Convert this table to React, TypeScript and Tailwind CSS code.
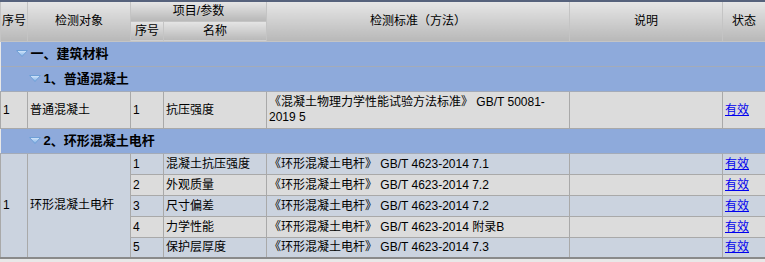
const font = { fontFamily: '"Liberation Sans", "Noto Sans CJK SC", sans-serif' };

type Item = { no: number; name: string; std: string };

const poleItems: Item[] = [
  { no: 1, name: "混凝土抗压强度", std: "《环形混凝土电杆》 GB/T 4623-2014 7.1" },
  { no: 2, name: "外观质量", std: "《环形混凝土电杆》 GB/T 4623-2014 7.2" },
  { no: 3, name: "尺寸偏差", std: "《环形混凝土电杆》 GB/T 4623-2014 7.2" },
  { no: 4, name: "力学性能", std: "《环形混凝土电杆》 GB/T 4623-2014 附录B" },
  { no: 5, name: "保护层厚度", std: "《环形混凝土电杆》 GB/T 4623-2014 7.3" },
];

const Caret = () => (
  <svg width="12" height="7" viewBox="0 0 12 7" className="shrink-0">
    <defs>
      <linearGradient id="caret" x1="0" y1="0" x2="0" y2="1">
        <stop offset="0" stopColor="#d6e8fb" />
        <stop offset="1" stopColor="#7fb0e6" />
      </linearGradient>
    </defs>
    <polygon points="0.5,0.5 11.5,0.5 6,6.5" fill="url(#caret)" stroke="#6f9fd6" strokeWidth="1" />
  </svg>
);

const Th = ({ children, ...rest }: React.ThHTMLAttributes<HTMLTableCellElement>) => (
  <th
    {...rest}
    className="border border-[#c4c4c4] bg-gradient-to-b from-[#e6e6e6] to-[#b8b8b8] p-0 text-center font-normal text-[12px] text-black"
  >
    {children}
  </th>
);

const Group = ({ title, indent }: { title: string; indent: boolean }) => (
  <tr className="h-[25px] bg-[#8eaadb]">
    <td colSpan={7} className="border-y border-[#a4abb8] p-0">
      <div className={`flex items-center gap-[3px] ${indent ? "pl-[28px]" : "pl-[15px]"}`}>
        <Caret />
        <span className="text-[13px] font-bold text-black">{title}</span>
      </div>
    </td>
  </tr>
);

const Link = () => (
  <a href="#" className="text-[#0000ee] underline">
    有效
  </a>
);

const td = "border border-[#a9a9a9] px-[2px] py-0 text-[12px] text-black align-middle";

export default function App() {
  return (
    <div style={font} className="h-[262px] w-[765px] overflow-hidden bg-[#e8e8e8]">
      <table className="w-[765px] table-fixed border-collapse border-t-2 border-t-[#56627c] border-b-2 border-b-[#8a8a8a]">
        <colgroup>
          <col className="w-[27px]" />
          <col className="w-[103px]" />
          <col className="w-[33px]" />
          <col className="w-[103px]" />
          <col className="w-[303px]" />
          <col className="w-[153px]" />
          <col className="w-[43px]" />
        </colgroup>
        <thead>
          <tr className="h-[20px]">
            <Th rowSpan={2}>序号</Th>
            <Th rowSpan={2}>检测对象</Th>
            <Th colSpan={2}>项目/参数</Th>
            <Th rowSpan={2}>检测标准（方法）</Th>
            <Th rowSpan={2}>说明</Th>
            <Th rowSpan={2}>状态</Th>
          </tr>
          <tr className="h-[20px]">
            <Th>序号</Th>
            <Th>名称</Th>
          </tr>
        </thead>
        <tbody>
          <Group title="一、建筑材料" indent={false} />
          <Group title="1、普通混凝土" indent />
          <tr className="h-[37px] bg-[#dcdcdc]">
            <td className={td}>1</td>
            <td className={td}>普通混凝土</td>
            <td className={td}>1</td>
            <td className={td}>抗压强度</td>
            <td className={`${td} leading-[15px]`}>
              《混凝土物理力学性能试验方法标准》 GB/T 50081-
              <br />
              2019 5
            </td>
            <td className={td}></td>
            <td className={td}>
              <Link />
            </td>
          </tr>
          <Group title="2、环形混凝土电杆" indent />
          {poleItems.map((it, i) => (
            <tr key={it.no} className={`h-[21px] ${i % 2 === 0 ? "bg-[#cbd3df]" : "bg-[#dcdcdc]"}`}>
              {i === 0 && (
                <>
                  <td rowSpan={5} className={`${td} bg-[#cbd3df]`}>
                    1
                  </td>
                  <td rowSpan={5} className={`${td} bg-[#cbd3df]`}>
                    环形混凝土电杆
                  </td>
                </>
              )}
              <td className={td}>{it.no}</td>
              <td className={td}>{it.name}</td>
              <td className={td}>{it.std}</td>
              <td className={td}></td>
              <td className={td}>
                <Link />
              </td>
            </tr>
          ))}
        </tbody>
      </table>
    </div>
  );
}
